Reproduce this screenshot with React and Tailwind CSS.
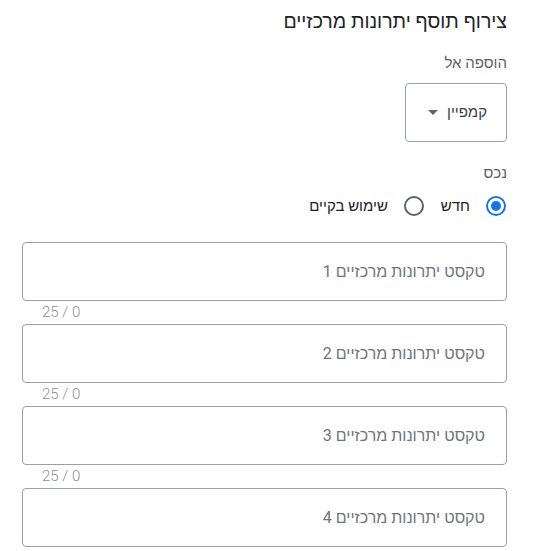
const INPUTS = [1, 2, 3, 4];

function Radio({ checked, label }) {
  return (
    <label className="flex items-center gap-4">
      <span
        className={
          checked
            ? 'flex h-5 w-5 items-center justify-center rounded-full border-2 border-[#1a73e8]'
            : 'flex h-5 w-5 items-center justify-center rounded-full border-2 border-[#5f6368]'
        }
      >
        {checked && <span className="h-2.5 w-2.5 rounded-full bg-[#1a73e8]" />}
      </span>
      <span className="text-[15px] text-[#202124]">{label}</span>
    </label>
  );
}

function TextField({ index, last }) {
  return (
    <div className="flex flex-col">
      <div className="flex h-[59px] items-center rounded-[4px] border border-[#9aa0a6] pr-[21px]">
        <span className="text-[16px] text-[#70757a]">טקסט יתרונות מרכזיים {index}</span>
      </div>
      {!last && (
        <div className="flex h-[23px] items-center justify-end pl-[20px] text-[15px] font-light text-[#8a8f94]">
          0 / 25
        </div>
      )}
    </div>
  );
}

export default function App() {
  return (
    <div
      dir="rtl"
      className="flex min-h-[551px] flex-col bg-white pl-[22px] pr-[26px] pt-[10px] font-['Roboto','Liberation_Sans',sans-serif]"
    >
      <h2 className="text-[19.5px] leading-6 text-[#202124]">צירוף תוסף יתרונות מרכזיים</h2>

      <div className="mt-[19px] text-[15px] leading-5 text-[#5f6368]">הוספה אל</div>

      <div className="mt-[10px] flex">
        <button
          type="button"
          className="flex h-[59px] w-[102px] items-center gap-[9px] rounded-[4px] border border-[#9aa0a6] pr-[19px]"
        >
          <span className="text-[15px] text-[#3c4043]">קמפיין</span>
          <span className="h-0 w-0 border-x-[5px] border-t-[5px] border-x-transparent border-t-[#5f6368]" />
        </button>
      </div>

      <div className="mt-[21px] text-[15px] leading-5 text-[#5f6368]">נכס</div>

      <div className="mt-[11px] flex h-6 items-center gap-[17px] pr-px">
        <Radio checked label="חדש" />
        <Radio label="שימוש בקיים" />
      </div>

      <div className="mt-[24px] flex flex-col">
        {INPUTS.map((n) => (
          <TextField key={n} index={n} last={n === INPUTS.length} />
        ))}
      </div>
    </div>
  );
}
